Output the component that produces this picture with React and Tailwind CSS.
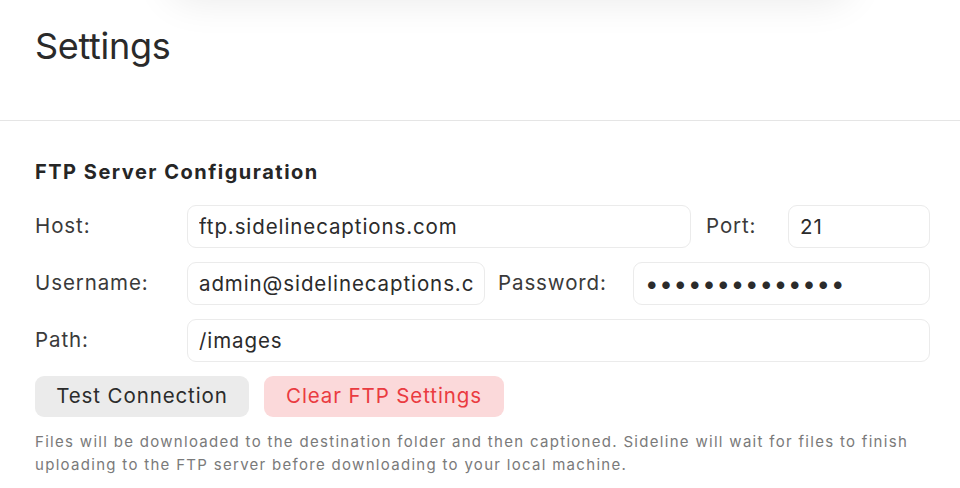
import { useState } from "react";

const FONT = { fontFamily: "Inter, 'Liberation Sans', sans-serif" };

function Field({ value, type = "text", className = "" }) {
  const [val, setVal] = useState(value);
  return (
    <input
      type={type}
      value={val}
      onChange={(e) => setVal(e.target.value)}
      className={`h-[43px] rounded-[9px] border border-[#ebebeb] bg-white px-[11px] text-[#2b2b2b] outline-none ${className}`}
    />
  );
}

export default function App() {
  return (
    <div className="relative h-[488px] w-[960px] overflow-hidden bg-white" style={FONT}>
      {/* shadow of the floating bar above the viewport */}
      <div className="absolute -top-[60px] left-[170px] h-[60px] w-[680px] rounded-[20px] bg-white shadow-[0_0_40px_rgba(0,0,0,0.09)]" />

      <header className="h-[121px] border-b border-[#e5e5e5] px-[35px] pt-[19px]">
        <h1 className="text-[36px] font-normal tracking-[-0.3px] text-[#2a2a2a]">Settings</h1>
      </header>

      <section className="px-[35px] pr-[30px] pt-[36px]">
        <h2 className="text-[20px] font-bold tracking-[1.5px] text-[#262626]">FTP Server Configuration</h2>

        <div className="mt-[18px] flex flex-col gap-[14px] text-[20.5px] tracking-[0.9px] text-[#3a3a3a]">
          <div className="flex items-center">
            <label className="w-[152px]">Host:</label>
            <Field value="ftp.sidelinecaptions.com" className="w-[504px] text-[20.5px] tracking-[0.9px]" />
            <label className="ml-[15px] w-[82px]">Port:</label>
            <Field value="21" className="w-[142px] text-[20.5px] tracking-[0.9px]" />
          </div>
          <div className="flex items-center">
            <label className="w-[152px]">Username:</label>
            <Field value="admin@sidelinecaptions.com" className="w-[298px] text-[20.5px] tracking-[0.9px]" />
            <label className="ml-[13px] w-[135px]">Password:</label>
            <Field value="password123456" type="password" className="w-[297px] text-[24px] tracking-[0.8px]" />
          </div>
          <div className="flex items-center">
            <label className="w-[152px]">Path:</label>
            <Field value="/images" className="w-[743px] text-[20.5px] tracking-[0.9px]" />
          </div>
        </div>

        <div className="mt-[14px] flex gap-[15px] text-[20.5px] tracking-[0.9px]">
          <button className="h-[41px] w-[214px] rounded-[9px] bg-[#ebebeb] text-[#2b2b2b]">Test Connection</button>
          <button className="h-[41px] w-[240px] rounded-[9px] bg-[#fbd9da] text-[#ea3b40]">Clear FTP Settings</button>
        </div>

        <p className="mt-[13px] w-[895px] text-[15px] leading-[23px] tracking-[1.3px] text-[#7a7a7a]">
          Files will be downloaded to the destination folder and then captioned. Sideline will wait for files to finish
          uploading to the FTP server before downloading to your local machine.
        </p>
      </section>
    </div>
  );
}
